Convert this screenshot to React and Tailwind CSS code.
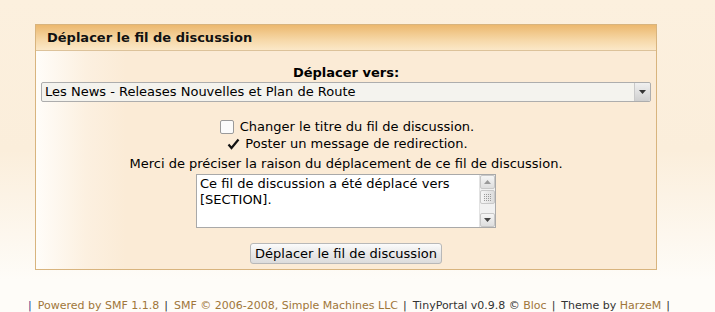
export default function App() {
  const font = { fontFamily: '"DejaVu Sans", Verdana, sans-serif' };
  const sep = <span className="ml-[5px] mr-[6px]">|</span>;
  return (
    <div
      className="w-[715px] h-[312px] overflow-hidden bg-[linear-gradient(to_bottom,#fcf0de_0px,#fbeedb_150px,#fefcf8_280px)] text-[13px] text-black"
      style={font}
    >
      <div className="pt-[24px] pl-[35px]">
        <div className="w-[622px] h-[246px] border border-[#d8b47e] bg-[linear-gradient(to_right,#fffdf9_0px,#fcf0e0_50px,#fbebd6_90px)]">
          <div className="h-[26px] border-b border-[#dcc29a] bg-[linear-gradient(to_bottom,#ecb86e,#f6d8a8_60%,#fbe8c8)] pl-[11px] flex items-center font-bold text-[13px] text-[#111]">
            Déplacer le fil de discussion
          </div>
          <div className="flex flex-col items-center px-[5px]">
            <div className="mt-[14px] font-bold leading-[16px]">Déplacer vers:</div>
            <div className="mt-[1px] w-[610px] h-[20px] flex items-center border border-[#adadad] rounded-[2px] bg-[#f4f3ee]">
              <span className="flex-1 pl-[3px] leading-[16px]">Les News - Releases Nouvelles et Plan de Route</span>
              <span className="w-[16px] h-[18px] flex items-center justify-center border-l border-[#c9c9c9] bg-[linear-gradient(to_bottom,#f0f0f0,#cfcfcf)] rounded-r-[2px]">
                <svg width="7" height="4" viewBox="0 0 7 4"><path d="M0 0h7L3.5 4z" fill="#333" /></svg>
              </span>
            </div>
            <div className="mt-[17px] flex items-center leading-[16px] pl-[2px]">
              <span className="w-[14px] h-[14px] border border-[#9a9a9a] rounded-[2px] bg-[#fbfbfb] mr-[6px]" />
              Changer le titre du fil de discussion.
            </div>
            <div className="mt-[1px] flex items-center leading-[16px] pl-[2px]">
              <span className="w-[14px] h-[14px] mr-[5px] flex items-center justify-center">
                <svg width="13" height="12" viewBox="0 0 13 12">
                  <path d="M1.5 6.5l3 3.5L11.5 1.5" stroke="#111" strokeWidth="2.2" fill="none" />
                </svg>
              </span>
              Poster un message de redirection.
            </div>
            <div className="mt-[4px] leading-[16px]">
              Merci de préciser la raison du déplacement de ce fil de discussion.
            </div>
            <div className="mt-[2px] w-[300px] h-[54px] border border-[#a9a9a9] bg-white flex">
              <div className="flex-1 pl-[3px] pt-[1px] leading-[16px]">
                Ce fil de discussion a été déplacé vers<br />[SECTION].
              </div>
              <div className="w-[16px] flex flex-col justify-between bg-[#f1f1f1] border-l border-[#e2e2e2]">
                <div className="h-[14px] flex items-center justify-center bg-[linear-gradient(to_bottom,#f5f5f5,#dedede)] border border-[#c8c8c8] rounded-[2px]">
                  <svg width="7" height="4" viewBox="0 0 7 4"><path d="M0 4h7L3.5 0z" fill="#999" /></svg>
                </div>
                <div className="h-[14px] -mt-[8px] flex items-center justify-center bg-[linear-gradient(to_right,#f5f5f5,#dcdcdc)] border border-[#c8c8c8] rounded-[2px]">
                  <svg width="7" height="7" viewBox="0 0 7 7">
                    <path d="M0 0h1v1H0zM2 0h1v1H2zM4 0h1v1H4zM6 0h1v1H6zM0 2h1v1H0zM2 2h1v1H2zM4 2h1v1H4zM6 2h1v1H6zM0 4h1v1H0zM2 4h1v1H2zM4 4h1v1H4zM6 4h1v1H6zM0 6h1v1H0zM2 6h1v1H2zM4 6h1v1H4zM6 6h1v1H6z" fill="#9a9a9a" />
                  </svg>
                </div>
                <div className="h-[14px] flex items-center justify-center bg-[linear-gradient(to_bottom,#f5f5f5,#dedede)] border border-[#c8c8c8] rounded-[2px]">
                  <svg width="7" height="4" viewBox="0 0 7 4"><path d="M0 0h7L3.5 4z" fill="#444" /></svg>
                </div>
              </div>
            </div>
            <button className="mt-[15px] h-[21px] px-[4px] border border-[#b8b8b8] rounded-[3px] bg-[linear-gradient(to_bottom,#fbfbfb,#e9e9e9_50%,#dcdcdc)] text-[13px] leading-[16px] text-black" style={font}>
              Déplacer le fil de discussion
            </button>
          </div>
        </div>
      </div>
      <div className="mt-[29px] pl-[28px] text-[11px] leading-[14px] text-[#333] whitespace-nowrap flex">
        <span className="text-[#3a3a8a] mr-[6px]">|</span>
        <span className="text-[#a0763a]">Powered by SMF 1.1.8</span>
        {sep}
        <span className="text-[#a0763a]">SMF © 2006-2008, Simple Machines LLC</span>
        {sep}
        <span>TinyPortal v0.9.8 ©&nbsp;</span>
        <span className="text-[#a0763a]">Bloc</span>
        {sep}
        <span>Theme by&nbsp;</span>
        <span className="text-[#a0763a]">HarzeM</span>
        {sep}
      </div>
    </div>
  );
}
